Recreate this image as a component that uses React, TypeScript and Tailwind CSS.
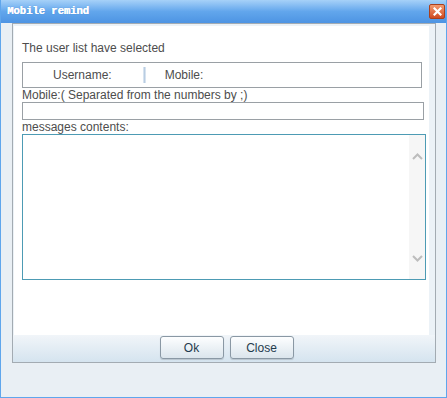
import React from "react";

const sans = { fontFamily: '"Liberation Sans", Arial, sans-serif' };

const App = () => {
  return (
    <div className="w-[447px] h-[398px] flex flex-col bg-[#e9eff4] border-x border-b border-[#5fa6ec]" style={sans}>
      {/* title bar */}
      <div className="h-[23px] shrink-0 flex items-center justify-between pl-[6px] pr-[1px] bg-gradient-to-b from-[#a6d1f8] via-[#62a6ec] to-[#4d94e3]">
        <span
          className="text-[10.5px] font-bold text-white leading-none"
          style={{ fontFamily: '"Liberation Mono", "Courier New", monospace', textShadow: "0.5px 0 0 #fff, 0 0 1px #3a78c0" }}
        >
          Mobile remind
        </span>
        <div className="w-[16px] h-[15px] rounded-[2px] border border-[#a9401e] bg-gradient-to-b from-[#f29a70] to-[#cf4a1f] flex items-center justify-center">
          <svg width="9" height="9" viewBox="0 0 9 9">
            <path d="M1.5 1.5 L7.5 7.5 M7.5 1.5 L1.5 7.5" stroke="white" strokeWidth="2.2" strokeLinecap="square" />
          </svg>
        </div>
      </div>

      {/* panel */}
      <div className="ml-[11px] mr-[10px] h-[340px] border border-[#a3abb2] flex flex-col bg-[#ecf2f7]">
        <div className="mt-[2px] ml-[1px] mr-[6px] h-[309px] bg-white px-[8px] pt-[15px] text-[12px] text-[#4d4d4d]">
          <div className="leading-[14px]">The user list have selected</div>

          <div className="mt-[7px] h-[26px] w-[400px] border border-[#9aa0a5] flex items-center pl-[30px]">
            <span>Username:</span>
            <div className="ml-[31px] w-[3px] h-[16px] bg-gradient-to-r from-[#e6eef7] via-[#b9cde2] to-[#e6eef7]" />
            <span className="ml-[19px]">Mobile:</span>
          </div>

          <div className="leading-[14px]">Mobile:( Separated from the numbers by ;)</div>
          <div className="h-[18px] w-[402px] border border-[#9aa0a5]" />

          <div className="leading-[14px]">messages contents:</div>
          <div className="h-[146px] w-[404px] border border-[#4d9bb4] flex">
            <div className="flex-1" />
            <div className="w-[16px] bg-[#f6f6f6] flex flex-col items-center justify-between pt-[18px] pb-[17px]">
              <svg width="11" height="7" viewBox="0 0 11 7">
                <path d="M1 6 L5.5 1.5 L10 6" fill="none" stroke="#bdbdbd" strokeWidth="2" />
              </svg>
              <svg width="11" height="7" viewBox="0 0 11 7">
                <path d="M1 1 L5.5 5.5 L10 1" fill="none" stroke="#bdbdbd" strokeWidth="2" />
              </svg>
            </div>
          </div>
        </div>

        {/* button bar */}
        <div className="flex-1 flex justify-center items-start pt-[1px] pl-[5px] gap-[6px] bg-gradient-to-b from-[#f1f5f9] to-[#d5e4ef]">
          <button className="w-[64px] h-[23px] rounded-[3px] border border-[#8a98a4] bg-gradient-to-b from-[#fdfeff] to-[#dbe5ec] text-[12px] text-[#1f3b4d] shadow-[0_1px_1px_rgba(0,0,0,0.15)]">
            Ok
          </button>
          <button className="w-[64px] h-[23px] rounded-[3px] border border-[#8a98a4] bg-gradient-to-b from-[#fdfeff] to-[#dbe5ec] text-[12px] text-[#1f3b4d] shadow-[0_1px_1px_rgba(0,0,0,0.15)]">
            Close
          </button>
        </div>
      </div>
    </div>
  );
};

export default App;
